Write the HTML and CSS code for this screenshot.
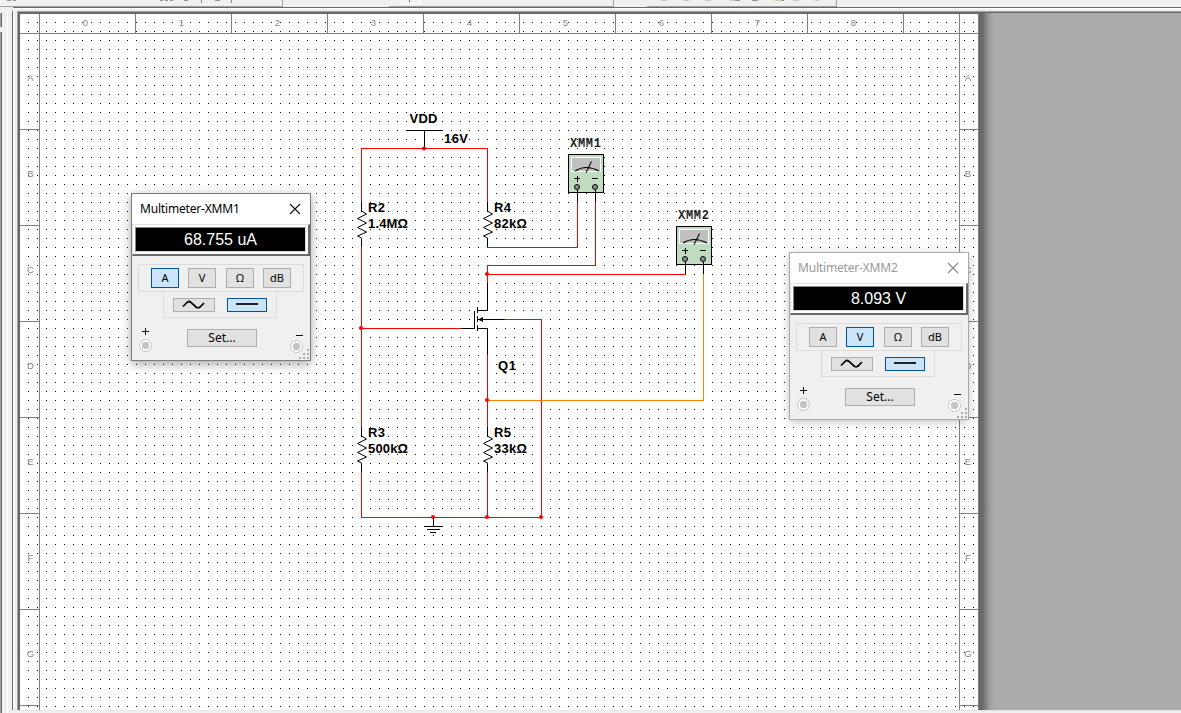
FILE: index.html
```html
<!DOCTYPE html>
<html lang="en">
<head>
<meta charset="utf-8">
<title>Circuit schematic</title>
<link rel="stylesheet" href="styles.css">
</head>
<body>
<div class="app">
  <svg class="toolbar" width="1181" height="11" shape-rendering="crispEdges">
    <rect width="1181" height="11" fill="#f0f0f0"/>
    <path d="M0 6.500H283M389 6.500H614M647 6.500H837M282.500 0V6M613.500 0V6M836.500 0V6" stroke="#a0a0a0"/>
    <path d="M13 7.500H1181" stroke="#696969"/>
    <path d="M13 8.500H1181" stroke="#fff"/>
    <path d="M201.500 0V3M231.500 0V3" stroke="#858585"/>
    <path d="M7 .5h4M13 .5h3M160 .5h3M165 .5h3M170 .5h3M184 .5h4M215 .5h5" stroke="#929292"/>
    <rect x="400" width="21" height="4" fill="#fff"/><path d="M401 0V3H420V0Z" fill="#f4f4f4"/><path d="M409.500 0V2" stroke="#777"/>
    <path d="M661 .5h6M683 .5h6M705 .5h6M730 .5h5M775 .5h5M793 .5h6M815 .5h4" stroke="#b5d4aa"/>
    <path d="M735 .5h5M752 .5h6M781 .5h3" stroke="#83a778"/>
  </svg>
  <div class="workspace">
    <div class="rail"><div class="rail-stub"></div><div class="rail-long"></div></div>
    <div class="gutter"></div>
    <div class="sheet">
      <svg class="schematic" viewBox="20 14 958 696" width="958" height="696">
        <defs>
          <pattern id="dots" x="28" y="22" width="9" height="9" patternUnits="userSpaceOnUse"><rect width="1" height="1" fill="#000"/></pattern>
          <g id="res"><path d="M.5 -9V0L5.500 3L-3.500 7.500L5.500 12L-3.500 16.500L5.500 21L-3.500 25L.5 27V36"/></g>
          <g id="meter">
            <rect x=".5" y=".5" width="35" height="38" fill="#c0dcc0" stroke="#000" shape-rendering="crispEdges"/>
            <rect x="3.500" y="3.500" width="29" height="14" fill="#c0c0c0" stroke="#fff" shape-rendering="crispEdges"/>
            <path d="M7 17Q18 10 31 17M18 18.500L23.500 7.500" fill="none" stroke="#000" stroke-width="1.100"/>
            <path d="M6 24.500h6M9.500 22v6M24 24.500h6M9.500 36v12M27.500 36v12" stroke="#000" shape-rendering="crispEdges"/>
            <circle cx="9" cy="33" r="2.500" fill="#909090" stroke="#000"/><circle cx="27" cy="33" r="2.500" fill="#909090" stroke="#000"/>
          </g>
        </defs>
        <rect x="20" y="14" width="958" height="696" fill="#fff"/>
        <rect x="28" y="22" width="946" height="685" fill="url(#dots)" shape-rendering="crispEdges"/>
        <g class="rule">
          <path d="M20 33.500H978M39.500 14V710M959.500 14V710"/>
          <path d="M135.500 14V33M231.500 14V33M327.500 14V33M423.500 14V33M519.500 14V33M615.500 14V33M711.500 14V33M807.500 14V33M903.500 14V33"/>
          <path d="M20 129.500H39M20 225.500H39M20 321.500H39M20 417.500H39M20 513.500H39M20 609.500H39M20 705.500H39"/>
          <path d="M960 129.500H978M960 225.500H978M960 321.500H978M960 417.500H978M960 513.500H978M960 609.500H978M960 705.500H978"/>
        </g>
        <g class="coord">
          <text x="85.500" y="26">0</text><text x="181.500" y="26">1</text><text x="277.500" y="26">2</text><text x="373.500" y="26">3</text><text x="469.500" y="26">4</text><text x="565.500" y="26">5</text><text x="661.500" y="26">6</text><text x="757.500" y="26">7</text><text x="853.500" y="26">8</text>
          <text x="30.500" y="81">A</text><text x="30.500" y="177">B</text><text x="30.500" y="273">C</text><text x="30.500" y="369">D</text><text x="30.500" y="465">E</text><text x="30.500" y="561">F</text><text x="30.500" y="657">G</text>
          <text x="968" y="81">A</text><text x="968" y="177">B</text><text x="968" y="273">C</text><text x="968" y="369">D</text><text x="968" y="465">E</text><text x="968" y="561">F</text><text x="968" y="657">G</text>
        </g>
        <g class="wire">
          <path d="M361.500 203V148.500H487.500V203"/>
          <path d="M361.500 247V428M361.500 472V517.500H541.500V319.500H505M487.500 472V517"/>
          <path d="M487 247.500H577.500V202M595.500 202V265.500H487.500V283M487 274.500H685.500"/>
          <path d="M361 328.500H461M487.500 355V428"/>
        </g>
        <path class="wire-orange" d="M703.500 274V400.500H487"/>
        <g class="part">
          <path d="M406 130.500H443M424.500 130V148"/>
          <path d="M461 328.500H474.500V311M477.500 307V313M477.500 316V322M477.500 325V331M477 310.500H487.500V283M477 319.500H505M477 328.500H487.500V355"/>
          <path d="M433.500 517V526M424 526.500H443M427 529.500H440M430 532.500H436"/>
        </g>
        <path d="M478 319.500L483 317V322Z"/>
        <g class="zigzag">
          <use href="#res" x="361" y="211"/><use href="#res" x="487" y="211"/>
          <use href="#res" x="361" y="436"/><use href="#res" x="487" y="436"/>
        </g>
        <g class="node">
          <circle class="node-dark" cx="424" cy="148.500" r="2"/><circle cx="487" cy="274" r="2"/><circle cx="361" cy="328" r="2"/><circle cx="487" cy="400" r="2"/><circle cx="433" cy="517" r="2"/><circle cx="487" cy="517" r="2"/><circle cx="541" cy="517" r="2"/>
        </g>
        <use href="#meter" x="568" y="154"/><use href="#meter" x="676" y="226"/>
        <g class="label">
          <text x="409.500" y="123" textLength="28">VDD</text><text x="444" y="142.500" textLength="24">16V</text>
          <text x="368" y="211.500" textLength="17">R2</text><text x="368" y="227.500" textLength="40">1.4MΩ</text>
          <text x="494" y="211.500" textLength="17">R4</text><text x="494" y="227.500" textLength="33">82kΩ</text>
          <text x="368" y="436.500" textLength="17">R3</text><text x="368" y="452.500" textLength="40">500kΩ</text>
          <text x="494" y="436.500" textLength="17">R5</text><text x="494" y="452.500" textLength="33">33kΩ</text>
          <text x="498" y="369.500" textLength="18">Q1</text>
        </g>
        <g class="meter-label"><text x="570" y="147" textLength="31">XMM1</text><text x="678" y="219" textLength="31">XMM2</text></g>
      </svg>
    </div>
    <div class="desk"></div>
  </div>

  <section class="meter meter-one">
    <header class="title"><span>Multimeter-XMM1</span><svg width="12" height="12"><path d="M1 1L11 11M11 1L1 11"/></svg></header>
    <div class="bezel"><div class="screen">68.755 uA</div></div>
    <div class="modes"><button class="key on">A</button><button class="key">V</button><button class="key gap">Ω</button><button class="key">dB</button></div>
    <div class="waves">
      <button class="wave"><svg width="24" height="10"><path d="M1 6.500L5 2.500Q7 .5 9 2.500L14 7Q16 8.500 18 7L22 3"/></svg></button>
      <button class="wave dc on"><svg width="24" height="10"><path d="M1 4H23"/></svg></button>
    </div>
    <footer class="base">
      <div class="jack"><svg class="sign" width="9" height="9"><path d="M1 4.500H8M4.500 1V8"/></svg><i></i></div>
      <button class="set">Set...</button>
      <div class="jack neg"><svg class="sign" width="9" height="9"><path d="M1 4.500H8"/></svg><i></i></div>
    </footer>
    <svg class="grip" width="10" height="10"><path d="M8 0h2v2h-2zM4 4h2v2h-2zM8 4h2v2h-2zM0 8h2v2h-2zM4 8h2v2h-2zM8 8h2v2h-2z"/></svg>
  </section>

  <section class="meter meter-two idle">
    <header class="title"><span>Multimeter-XMM2</span><svg width="12" height="12"><path d="M1 1L11 11M11 1L1 11"/></svg></header>
    <div class="bezel"><div class="screen">8.093 V</div></div>
    <div class="modes"><button class="key">A</button><button class="key on">V</button><button class="key gap">Ω</button><button class="key">dB</button></div>
    <div class="waves">
      <button class="wave"><svg width="24" height="10"><path d="M1 6.500L5 2.500Q7 .5 9 2.500L14 7Q16 8.500 18 7L22 3"/></svg></button>
      <button class="wave dc on"><svg width="24" height="10"><path d="M1 4H23"/></svg></button>
    </div>
    <footer class="base">
      <div class="jack"><svg class="sign" width="9" height="9"><path d="M1 4.500H8M4.500 1V8"/></svg><i></i></div>
      <button class="set">Set...</button>
      <div class="jack neg"><svg class="sign" width="9" height="9"><path d="M1 4.500H8"/></svg><i></i></div>
    </footer>
    <svg class="grip" width="10" height="10"><path d="M8 0h2v2h-2zM4 4h2v2h-2zM8 4h2v2h-2zM0 8h2v2h-2zM4 8h2v2h-2zM8 8h2v2h-2z"/></svg>
  </section>
</div>
</body>
</html>
```
FILE: styles.css
```css
* { box-sizing: border-box; }
body { margin: 0; overflow: hidden; background: #f0f0f0; }
.app { position: relative; width: 1181px; height: 713px; overflow: hidden; display: flex; flex-direction: column; }
svg { display: block; flex: none; }
.workspace { display: flex; height: 702px; background: linear-gradient(#e3e3e3, #e3e3e3) 13px 699px / 100% 1px no-repeat; }
.rail { width: 12px; display: flex; flex-direction: column; gap: 5px; padding-top: 2px; background: linear-gradient(90deg, #f0f0f0 7px, #fff 7px 8px, #f0f0f0 8px); }
.rail-stub, .rail-long { width: 2px; background: linear-gradient(90deg, #a0a0a0 1px, #696969 1px); }
.rail-stub { height: 14px; }
.rail-long { flex: 1; }
.gutter { width: 5px; height: 699px; background: linear-gradient(90deg, #696969 1px, #fff 1px 2px, #f0f0f0 2px); }
.sheet { width: 961px; height: 699px; padding: 3px 0 0 3px; background: linear-gradient(#a0a0a0, #a0a0a0) 0 0 / 100% 1px no-repeat, linear-gradient(90deg, #a0a0a0 1px, #696969 1px); }
.desk { flex: 1; height: 699px; border-top: 1px solid #a0a0a0; box-shadow: inset 0 1px #696969; background: linear-gradient(90deg, #808080 1px, #646464 1px, #6c6c6c 5px, #939393 10px, #ababab 15px); }

.rule path { stroke: #808080; fill: none; shape-rendering: crispEdges; }
.coord { font: 9.5px "Liberation Sans", Arial, sans-serif; fill: #858585; text-anchor: middle; }
.wire path { stroke: #f00; fill: none; shape-rendering: crispEdges; }
.wire-orange { stroke: #ff8000; fill: none; shape-rendering: crispEdges; }
.part path { stroke: #000; fill: none; shape-rendering: crispEdges; }
.zigzag { stroke: #000; fill: none; }
.node { fill: #f00; }
.node-dark { fill: #d00000; }
.label { font: bold 13px "Liberation Sans", Arial, sans-serif; }
.meter-label { font: bold 12px "Liberation Mono", "Courier New", monospace; fill: #222; }

.meter { position: absolute; width: 180px; height: 168px; border: 1px solid #7a7a7a; background: #f0f0f0; box-shadow: 0 3px 10px rgba(0,0,0,.35); font: 12px "Noto Sans", sans-serif; color: #000; }
.meter-one { left: 131px; top: 193px; }
.meter-two { left: 789px; top: 252px; }
.idle { border-color: #aaa; box-shadow: 0 2px 8px rgba(0,0,0,.25); }
.title { height: 30px; padding: 0 9px 0 8px; display: flex; align-items: center; justify-content: space-between; background: #fff; letter-spacing: -.18px; }
.title span { padding-bottom: 2px; }
.title svg { margin-bottom: 1px; }
.title path { fill: none; stroke: #111; stroke-width: 1.100; }
.idle .title { color: #999; }
.idle .title path { stroke: #888; }
.bezel { height: 32px; padding: 2px 2px 2px 2px; border: 1px solid #e3e3e3; border-right: 2px solid #696969; border-bottom: 2px solid #696969; background: #fff; }
.screen { height: 25px; border: 1px solid #888; border-right-color: #ddd; border-bottom-color: #ddd; background: #000; color: #fff; font: 16px/23px "Liberation Sans", Arial, sans-serif; text-align: center; }
.modes { height: 28px; width: 166px; margin: 8px 0 0 6px; border: 1px solid #dcdcdc; display: flex; align-items: center; padding-left: 12px; gap: 9px; }
button { padding: 0; margin: 0; border: 1px solid #adadad; border-radius: 0; background: #e1e1e1; color: #000; font: 12px/16px "Noto Sans", sans-serif; display: flex; align-items: center; justify-content: center; }
.key { width: 28px; height: 20px; font-size: 11px; }
.gap { margin-left: 1px; }
.on { background: #cce4f7; border-color: #005499; }
.waves { width: 114px; height: 26px; margin-left: 31px; border: 1px solid #dcdcdc; border-top: 0; display: flex; gap: 12px; padding: 6px 0 0 9px; }
.wave { width: 42px; height: 14px; }
.dc { width: 40px; }
.wave path { fill: none; stroke: #000; stroke-width: 1.700; }
.base { display: flex; align-items: flex-start; padding: 9px 7px 0; }
.jack { width: 13px; display: flex; flex-direction: column; align-items: center; gap: 3px; }
.jack i { width: 13px; height: 13px; border: 1px solid #c3c3c3; border-radius: 50%; background: radial-gradient(circle, #c5c5c5 3.500px, #fff 4px); }
.sign path { stroke: #111; fill: none; }
.set { width: 70px; height: 18px; margin: 2px 33px 0 35px; }
.neg { padding-top: 4px; gap: 0; }
.neg .sign { margin-left: 5px; }
.grip { position: absolute; right: 1px; bottom: 1px; }
.grip path { fill: #ababab; }
```
